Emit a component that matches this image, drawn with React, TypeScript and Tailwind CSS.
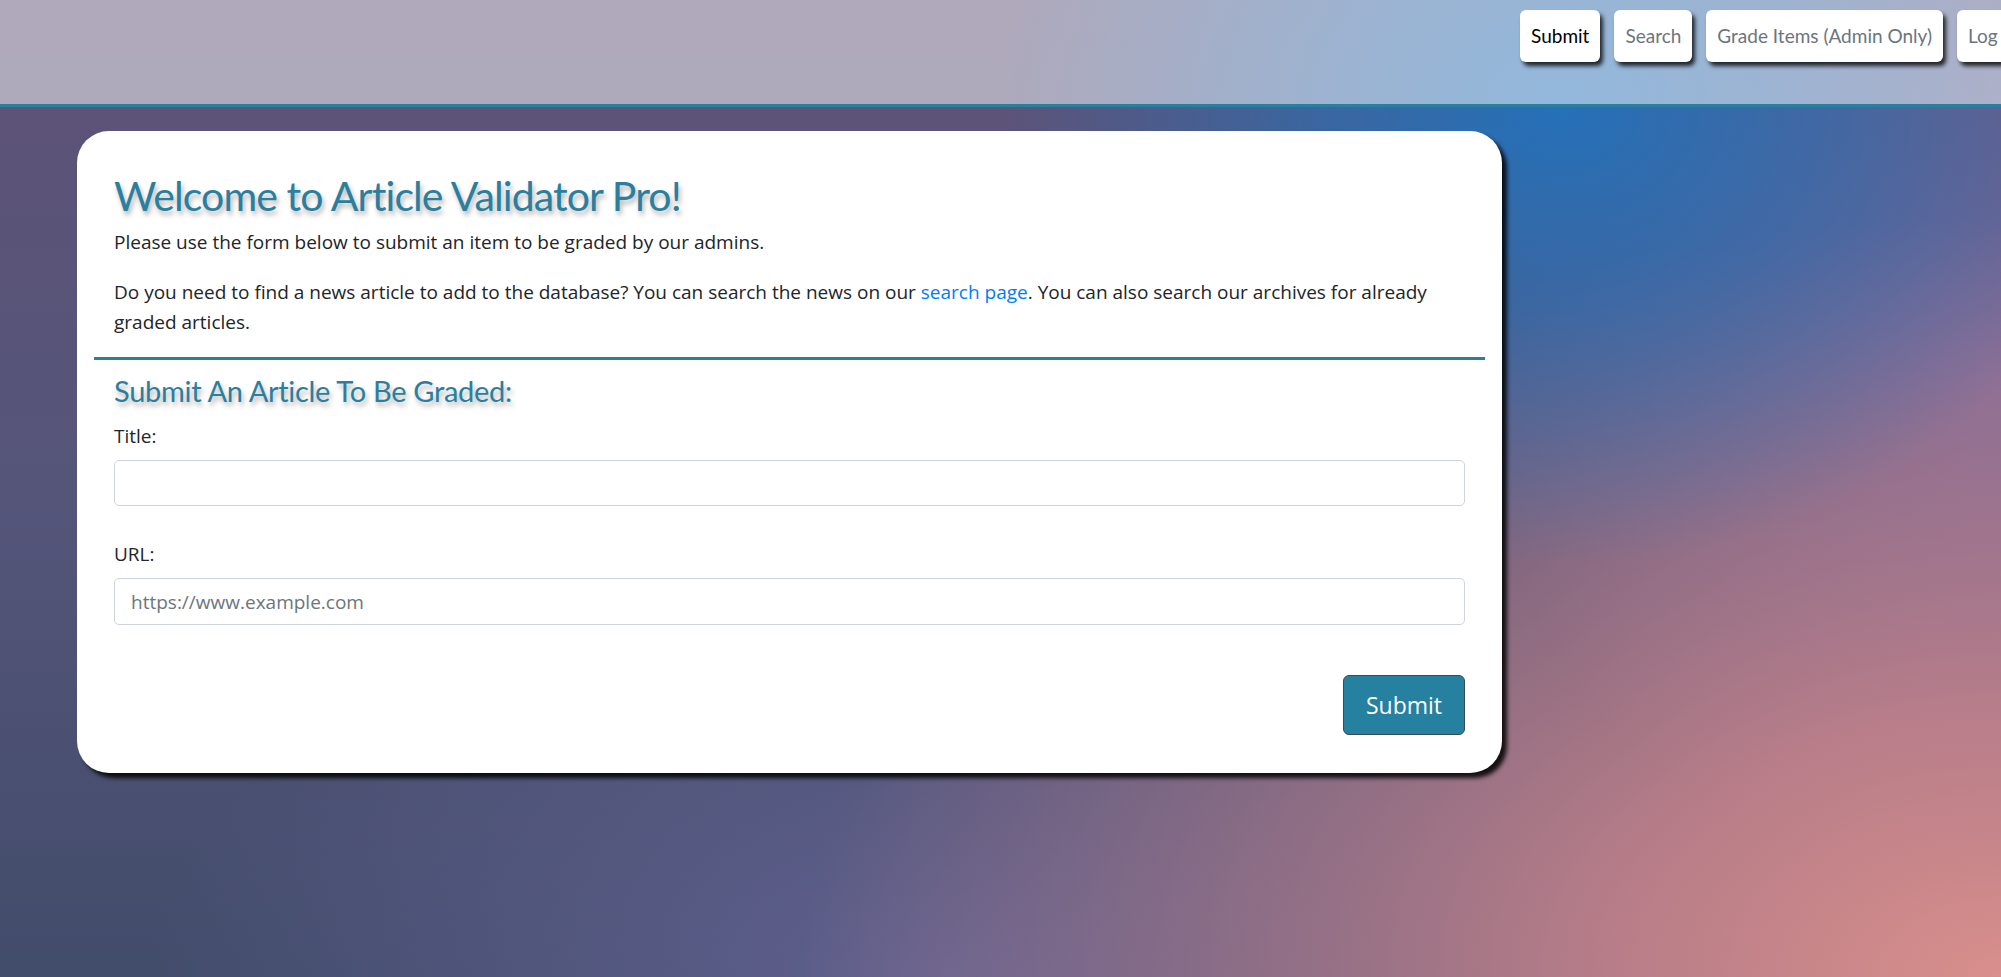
const navItems = [
  { label: "Submit", active: true },
  { label: "Search", active: false },
  { label: "Grade Items (Admin Only)", active: false },
  { label: "Log Out", active: false },
];

const gill = "font-['Lato','Open_Sans',sans-serif]";
const body = "font-['Open_Sans','Noto_Sans',sans-serif]";

const Header = () => {
  return (
    <header className="h-[107px] overflow-hidden border-b-[3px] border-[#2a7f9e] bg-white/50">
      <nav className="flex justify-end gap-[14px] pt-[10px] mr-[-45px]">
        {navItems.map((item) => (
          <div
            key={item.label}
            className={`${gill} h-[52px] px-[11px] flex items-center rounded-[6px] bg-white text-[19px] shadow-[3px_4px_4px_rgba(0,0,0,0.8)] whitespace-nowrap ${
              item.active ? "text-black" : "text-[#6c757d]"
            }`}
          >
            {item.label}
          </div>
        ))}
      </nav>
    </header>
  );
};

const App = () => {
  return (
    <div className="min-h-[977px] bg-[radial-gradient(ellipse_560px_460px_at_1560px_105px,#2571b9_0%,rgba(37,113,185,0.6)_45%,rgba(37,113,185,0)_100%),radial-gradient(ellipse_1200px_760px_at_2001px_977px,#d98f8c_0%,rgba(200,132,140,0.85)_35%,rgba(150,110,145,0)_100%),radial-gradient(ellipse_520px_520px_at_2001px_380px,rgba(125,106,156,0.9)_0%,rgba(125,106,156,0)_100%),radial-gradient(ellipse_800px_420px_at_950px_977px,rgba(98,98,145,0.95)_0%,rgba(98,98,145,0)_100%),linear-gradient(180deg,#5f5277_0%,#55557a_50%,#424c6b_100%)]">
      <Header />
      <main className="pt-[24px] pl-[77px]">
        <div className={`w-[1425px] rounded-[32px] bg-white px-[37px] pt-[38px] pb-[38px] shadow-[5px_5px_4px_rgba(0,0,0,0.85)] ${body} text-[#212529]`}>
          <h1 className={`${gill} text-[41px] leading-[54px] tracking-[-0.9px] text-[#2a7f9e] [text-shadow:2px_4px_5px_rgba(0,0,0,0.3)]`}>
            Welcome to Article Validator Pro!
          </h1>
          <p className="mt-[4px] text-[19px] leading-[30px]">
            Please use the form below to submit an item to be graded by our admins.
          </p>
          <p className="mt-[20px] text-[19px] leading-[30px]">
            Do you need to find a news article to add to the database? You can search the news on our{" "}
            <a className="text-[#007bff]" href="#">
              search page
            </a>
            . You can also search our archives for already graded articles.
          </p>
          <hr className="mt-[20px] -mx-[20px] border-0 h-[3px] bg-[#2a7f9e]" />
          <h3 className={`${gill} mt-[13px] text-[29px] leading-[36px] tracking-[-0.3px] text-[#2a7f9e] [text-shadow:2px_4px_5px_rgba(0,0,0,0.3)]`}>
            Submit An Article To Be Graded:
          </h3>
          <form className="mt-[12px] flex flex-col">
            <label className="text-[19px] leading-[30px]">Title:</label>
            <input
              type="text"
              className="mt-[9px] h-[46px] w-full rounded-[5px] border border-[#ced4da] px-[16px] text-[19px] outline-none"
            />
            <label className="mt-[33px] text-[19px] leading-[30px]">URL:</label>
            <input
              type="text"
              placeholder="https://www.example.com"
              className="mt-[9px] h-[47px] w-full rounded-[5px] border border-[#ced4da] px-[16px] text-[19px] outline-none placeholder:text-[#6c757d]"
            />
            <div className="mt-[50px] flex justify-end">
              <button
                type="button"
                className="h-[60px] w-[122px] rounded-[6px] border border-[#3a4a52] bg-[#2680a0] text-[23px] text-white"
              >
                Submit
              </button>
            </div>
          </form>
        </div>
      </main>
    </div>
  );
};

export default App;
